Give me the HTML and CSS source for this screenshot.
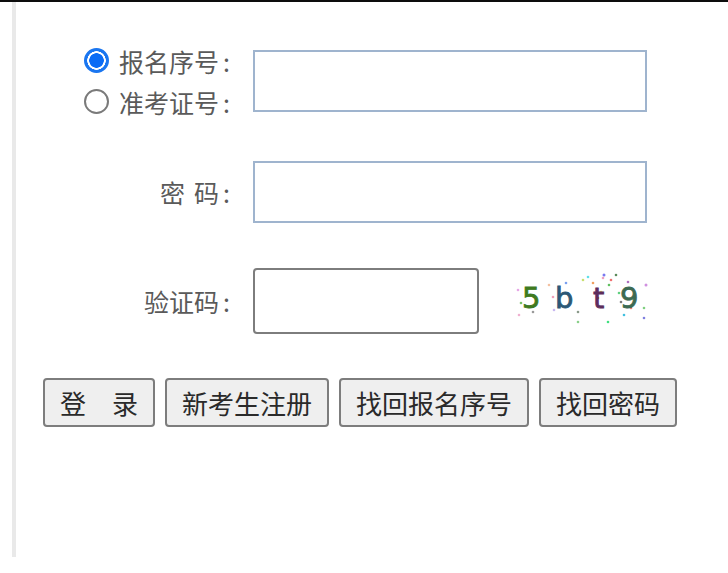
FILE: index.html
```html
<!DOCTYPE html>
<html lang="zh-CN">
<head>
<meta charset="utf-8">
<title>登录</title>
<link rel="stylesheet" href="styles.css">
</head>
<body>
<div class="topline"></div>
<div class="page">
  <form class="login">
    <div class="row row-id">
      <div class="label radios">
        <label class="radio-line"><input type="radio" name="t" class="radio" checked><span>报名序号<span class="colon">:</span></span></label>
        <label class="radio-line"><input type="radio" name="t" class="radio"><span>准考证号<span class="colon">:</span></span></label>
      </div>
      <input type="text" class="field">
    </div>
    <div class="row row-pwd">
      <div class="label"><span class="spaced">密</span>码<span class="colon">:</span></div>
      <input type="password" class="field">
    </div>
    <div class="row row-code">
      <div class="label">验证码<span class="colon">:</span></div>
      <input type="text" class="code-field">
      <svg class="captcha" width="140" height="60" viewBox="0 0 140 60">
        <g>
          <circle cx="5" cy="19" r="1.3" fill="#e6a6e6"/>
          <circle cx="8" cy="32" r="1.3" fill="#7ac26a"/>
          <circle cx="6" cy="44" r="1.3" fill="#f0b0d0"/>
          <circle cx="20" cy="41" r="1.3" fill="#9a9a9a"/>
          <circle cx="36" cy="14" r="1.3" fill="#f3c0a0"/>
          <circle cx="40" cy="26" r="1.3" fill="#f0a0b8"/>
          <circle cx="41" cy="39" r="1.3" fill="#c8b8f0"/>
          <circle cx="53" cy="12" r="1.3" fill="#7aa0f0"/>
          <circle cx="65" cy="41" r="1.3" fill="#8a9a8a"/>
          <circle cx="65" cy="51" r="1.3" fill="#8ad08a"/>
          <circle cx="70" cy="9" r="1.3" fill="#c8e070"/>
          <circle cx="75" cy="6" r="1.3" fill="#60e0e8"/>
          <circle cx="80" cy="12" r="1.3" fill="#f0a060"/>
          <circle cx="85" cy="27" r="1.3" fill="#f0a050"/>
          <circle cx="88" cy="21" r="1.3" fill="#e8e060"/>
          <circle cx="90" cy="7" r="1.3" fill="#f0a0c0"/>
          <circle cx="91" cy="4" r="1.5" fill="#7a7af0"/>
          <circle cx="95" cy="51" r="1.3" fill="#40e080"/>
          <circle cx="96" cy="14" r="1.3" fill="#60c060"/>
          <circle cx="98" cy="9" r="1.3" fill="#f07070"/>
          <circle cx="103" cy="4" r="1.3" fill="#5a8a5a"/>
          <circle cx="106" cy="22" r="1.3" fill="#60d080"/>
          <circle cx="108" cy="31" r="1.3" fill="#7a7a7a"/>
          <circle cx="111" cy="44" r="1.3" fill="#40c0e0"/>
          <circle cx="115" cy="11" r="1.3" fill="#b070c0"/>
          <circle cx="118" cy="37" r="1.3" fill="#f08070"/>
          <circle cx="133" cy="14" r="1.5" fill="#d090e0"/>
          <circle cx="131" cy="37" r="1.3" fill="#80d080"/>
          <circle cx="131" cy="47" r="1.3" fill="#8080e0"/>
        </g>
        <text x="9" y="37" class="c c1">5</text>
        <text x="42" y="37" class="c c2">b</text>
        <text x="80" y="37" class="c c3">t</text>
        <text x="107" y="37" class="c c4">9</text>
      </svg>
    </div>
    <div class="row row-btns">
      <button type="button" class="btn">登　录</button>
      <button type="button" class="btn">新考生注册</button>
      <button type="button" class="btn">找回报名序号</button>
      <button type="button" class="btn">找回密码</button>
    </div>
  </form>
</div>
</body>
</html>
```
FILE: styles.css
```css
html, body {
  margin: 0;
  padding: 0;
  background: #ffffff;
}
body {
  font-family: "Noto Sans CJK SC", "Noto Sans", sans-serif;
  width: 728px;
  height: 573px;
  overflow: hidden;
}
.topline {
  height: 2px;
  background: #0d0d0d;
}
.page {
  margin-left: 12px;
  border-left: 4px solid #e9e9e9;
  height: 555px;
  box-sizing: border-box;
}
.login {
  display: flex;
  flex-direction: column;
  padding-top: 48px;
}
.row {
  display: flex;
  align-items: center;
}
.label {
  width: 216px;
  flex: none;
  display: flex;
  justify-content: flex-end;
  font-size: 25px;
  line-height: 30px;
  color: #5a5a5a;
  margin-right: 21px;
  white-space: pre;
}
.colon {
  margin-left: 4px;
  margin-right: 2px;
}
.spaced {
  margin-right: 9px;
}
.radios {
  flex-direction: column;
  align-items: flex-end;
  justify-content: center;
  height: 62px;
  gap: 11px;
}
.radio-line {
  display: flex;
  align-items: center;
  gap: 10px;
}
.radio {
  appearance: none;
  -webkit-appearance: none;
  margin: 0;
  width: 25px;
  height: 25px;
  border-radius: 50%;
  border: 2px solid #7a7a7a;
  background: #fff;
  box-sizing: border-box;
}
.radio:checked {
  border: 2px solid #1a76f0;
  background: radial-gradient(circle, #0b6cf5 0 7px, #ffffff 7.5px 9px, #1a76f0 9.5px);
}
.field {
  width: 394px;
  height: 62px;
  box-sizing: border-box;
  border: 2px solid #9fb4ce;
  border-radius: 0;
  background: #fff;
  margin: 0;
  outline: none;
}
.row-pwd {
  margin-top: 49px;
}
.row-code {
  margin-top: 45px;
}
.code-field {
  width: 226px;
  height: 66px;
  box-sizing: border-box;
  border: 2px solid #7d7d7d;
  border-radius: 4px;
  background: #fff;
  margin: 0;
  outline: none;
}
.captcha {
  margin-left: 34px;
  flex: none;
}
.c {
  font-family: "DejaVu Sans", sans-serif;
  font-size: 29px;
  stroke-width: 0.8px;
}
.c1 { fill: #3f7a1f; stroke: #3f7a1f; }
.c2 { fill: #2b5876; stroke: #2b5876; }
.c3 { fill: #5c2d5c; stroke: #5c2d5c; }
.c4 { fill: #3d6a52; stroke: #3d6a52; }
.row-btns {
  margin-top: 44px;
  margin-left: 27px;
  gap: 10px;
}
.btn {
  font-family: "Noto Sans CJK SC", sans-serif;
  font-size: 26px;
  line-height: 37px;
  height: 49px;
  padding: 4px 15px;
  box-sizing: border-box;
  border: 2px solid #7d7d7d;
  border-radius: 4px;
  background: #efefef;
  color: #2a2a2a;
  margin: 0;
}
```
